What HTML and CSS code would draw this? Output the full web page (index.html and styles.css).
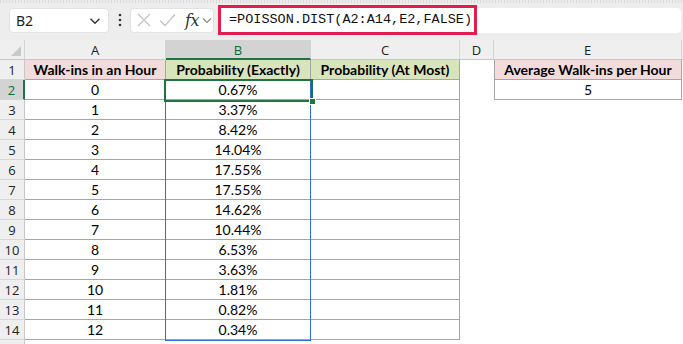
FILE: index.html
```html
<!DOCTYPE html>
<html>
<head>
<meta charset="utf-8">
<link rel="stylesheet" href="styles.css">
</head>
<body>
<div class="app">
  <div class="fbar">
    <div class="namebox">
      <span class="nb-text">B2</span>
      <svg class="chev" width="12" height="8" viewBox="0 0 12 8"><path d="M1.5 1.8 L6 6.2 L10.5 1.8" fill="none" stroke="#333" stroke-width="1.4"/></svg>
    </div>
    <svg class="vdots" width="4" height="14" viewBox="0 0 4 14"><circle cx="2" cy="2" r="1.3" fill="#333"/><circle cx="2" cy="7" r="1.3" fill="#333"/><circle cx="2" cy="12" r="1.3" fill="#333"/></svg>
    <div class="fnbox">
      <svg width="14" height="14" viewBox="0 0 14 14"><path d="M1 1 L13 13 M13 1 L1 13" stroke="#c4c4c4" stroke-width="1.3"/></svg>
      <svg width="17" height="14" viewBox="0 0 17 14"><path d="M1 7.5 L6 12.5 L16 1.5" fill="none" stroke="#c4c4c4" stroke-width="1.3"/></svg>
      <span class="fx">fx</span>
      <svg width="10" height="7" viewBox="0 0 10 7"><path d="M1 1.5 L5 5.5 L9 1.5" fill="none" stroke="#888" stroke-width="1.2"/></svg>
    </div>
    <div class="input">
      <span class="formula">=POISSON.DIST(A2:A14,E2,FALSE)</span>
    </div>
  </div>

  <div class="sheet">
    <div class="corner"><svg width="10" height="10" viewBox="0 0 10 10"><path d="M10 0 L10 10 L0 10 Z" fill="#c9c9c9"/></svg></div>
    <div class="ch">A</div>
    <div class="ch ch-sel">B</div>
    <div class="ch">C</div>
    <div class="ch">D</div>
    <div class="ch">E</div>
    <div class="ch ch-rest"></div>

    <div class="rh">1</div>
    <div class="c hd pink">Walk-ins in an Hour</div>
    <div class="c hd green">Probability (Exactly)</div>
    <div class="c hd green">Probability (At Most)</div>
    <div class="e"></div>
    <div class="c hd pink ebox">Average Walk-ins per Hour</div>
    <div class="e"></div>

    <div class="rh rh-sel">2</div>
    <div class="c">0</div>
    <div class="c">0.67%</div>
    <div class="c"></div>
    <div class="e"></div>
    <div class="c ebox">5</div>
    <div class="e"></div>

    <div class="rh">3</div><div class="c">1</div><div class="c">3.37%</div><div class="c"></div><div class="e"></div><div class="e"></div><div class="e"></div>
    <div class="rh">4</div><div class="c">2</div><div class="c">8.42%</div><div class="c"></div><div class="e"></div><div class="e"></div><div class="e"></div>
    <div class="rh">5</div><div class="c">3</div><div class="c">14.04%</div><div class="c"></div><div class="e"></div><div class="e"></div><div class="e"></div>
    <div class="rh">6</div><div class="c">4</div><div class="c">17.55%</div><div class="c"></div><div class="e"></div><div class="e"></div><div class="e"></div>
    <div class="rh">7</div><div class="c">5</div><div class="c">17.55%</div><div class="c"></div><div class="e"></div><div class="e"></div><div class="e"></div>
    <div class="rh">8</div><div class="c">6</div><div class="c">14.62%</div><div class="c"></div><div class="e"></div><div class="e"></div><div class="e"></div>
    <div class="rh">9</div><div class="c">7</div><div class="c">10.44%</div><div class="c"></div><div class="e"></div><div class="e"></div><div class="e"></div>
    <div class="rh">10</div><div class="c">8</div><div class="c">6.53%</div><div class="c"></div><div class="e"></div><div class="e"></div><div class="e"></div>
    <div class="rh">11</div><div class="c">9</div><div class="c">3.63%</div><div class="c"></div><div class="e"></div><div class="e"></div><div class="e"></div>
    <div class="rh">12</div><div class="c">10</div><div class="c">1.81%</div><div class="c"></div><div class="e"></div><div class="e"></div><div class="e"></div>
    <div class="rh">13</div><div class="c">11</div><div class="c">0.82%</div><div class="c"></div><div class="e"></div><div class="e"></div><div class="e"></div>
    <div class="rh">14</div><div class="c">12</div><div class="c">0.34%</div><div class="c"></div><div class="e"></div><div class="e"></div><div class="e"></div>
    <div class="rh"></div><div class="e"></div><div class="e"></div><div class="e"></div><div class="e"></div><div class="e"></div><div class="e"></div>

    <div class="spill"></div>
    <div class="selection"><span class="handle"></span></div>
  </div>
</div>
</body>
</html>
```

FILE: styles.css
```css
* { box-sizing: border-box; }
html, body { margin: 0; padding: 0; background: #fff; }
body { width: 683px; height: 344px; overflow: hidden; }

.app { width: 683px; height: 344px; overflow: hidden; }

.fbar {
  height: 40px;
  background-image: repeating-linear-gradient(90deg, #d9d9d9 0 1px, transparent 1px 3px);
  background-size: 100% 3px;
  background-repeat: no-repeat;
  background-color: #ededed;
  display: flex;
  align-items: center;
  padding: 0 2px 0 9px;
}

.namebox {
  width: 100px;
  height: 25px;
  background: #fff;
  border: 1px solid #e2e2e2;
  border-radius: 4px;
  display: flex;
  align-items: center;
  justify-content: space-between;
  padding: 0 7px 0 6px;
  font-family: "Noto Sans", "Open Sans", sans-serif;
  font-size: 14px;
  color: #222;
}
.nb-text { letter-spacing: -0.2px; }
.chev { margin-top: 1px; }

.vdots { margin: 0 8px 0 9px; }

.fnbox {
  width: 84px;
  height: 25px;
  background: #fff;
  border: 1px solid #e2e2e2;
  border-radius: 4px;
  display: flex;
  align-items: center;
  padding: 0 0 0 6px;
  gap: 8px;
}
.fx {
  font-family: "DejaVu Serif", "Liberation Serif", serif;
  font-style: italic;
  font-size: 16px;
  color: #333;
  margin-left: 1px;
  margin-right: -5px;
  letter-spacing: -0.5px;
}

.input {
  flex: 1;
  height: 25px;
  margin-left: 4px;
  background: #fff;
  border-radius: 4px;
  display: flex;
  align-items: center;
}
.formula {
  display: inline-block;
  height: 30px;
  width: 259px;
  border: 3px solid #e21e50;
  padding: 0 0 0 8px;
  line-height: 24px;
  font-family: "Liberation Mono", "DejaVu Sans Mono", monospace;
  font-size: 13.5px;
  color: #111;
  white-space: nowrap;
}

.sheet {
  position: relative;
  display: grid;
  grid-template-columns: 25px 141px 145px 149px 34px 188px 1fr;
  grid-template-rows: repeat(16, 20px);
  font-family: "Lato", "Open Sans", sans-serif;
  font-size: 14px;
  color: #000;
}

.corner {
  background: #efefef;
  border-right: 1px solid #d4d4d4;
  border-bottom: 1px solid #c8c8c8;
  display: flex;
  align-items: flex-end;
  justify-content: flex-end;
  padding: 0 3px 3px 0;
}

.ch {
  background: #efefef;
  border-right: 1px solid #d4d4d4;
  border-bottom: 1px solid #c8c8c8;
  display: flex;
  align-items: center;
  justify-content: center;
  font-family: "Open Sans", "Noto Sans", sans-serif;
  font-size: 13px;
  color: #222;
  padding-top: 1px;
}
.ch-sel {
  background: #d3d3d3;
  color: #0f6b33;
  border-bottom: 2px solid #217346;
}
.ch-rest { border-right: none; }

.rh {
  background: #efefef;
  border-right: 1px solid #c8c8c8;
  border-bottom: 1px solid #d6d6d6;
  display: flex;
  align-items: center;
  justify-content: center;
  font-family: "Open Sans", "Noto Sans", sans-serif;
  font-size: 13px;
  color: #222;
}
.rh-sel {
  background: #d3d3d3;
  color: #0f6b33;
  border-right: 2px solid #217346;
}

.c {
  border-right: 1px solid #a6a6a6;
  border-bottom: 1px solid #a6a6a6;
  display: flex;
  align-items: center;
  justify-content: center;
  white-space: nowrap;
  overflow: hidden;
}
.hd { font-weight: 700; }
.pink { background: #f2dcdb; }
.green { background: #d8e4bc; }
.ebox { border-left: 1px solid #a6a6a6; }
.e { background: #fff; }

.spill {
  position: absolute;
  left: 165px;
  top: 40px;
  width: 146px;
  height: 261px;
  border: 1px solid #2f6fd6;
  pointer-events: none;
}
.selection {
  position: absolute;
  left: 164px;
  top: 39px;
  width: 149px;
  height: 23px;
  border: 2px solid #217346;
}
.handle {
  position: absolute;
  right: -5px;
  bottom: -5px;
  width: 7px;
  height: 7px;
  background: #217346;
  border: 1px solid #fff;
}
```
